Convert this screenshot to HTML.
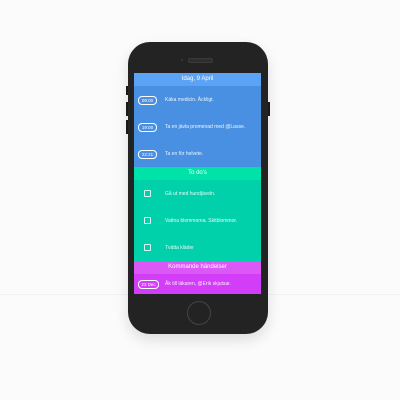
<!DOCTYPE html>
<html><head><style>
body{margin:0;width:400px;height:400px;background:#fbfbfc;position:relative;overflow:hidden;font-family:"Liberation Sans",sans-serif;}
.phone{position:absolute;left:128px;top:42px;width:140px;height:292px;background:#232323;border-radius:22px;box-shadow:0 6px 14px rgba(0,0,0,0.12);}
.btn{position:absolute;background:#1c1c1c;width:2px;}
.screen{position:absolute;left:134px;top:73px;width:127px;height:221px;overflow:hidden;color:#fff;font-size:5px;}
.h{height:13px;line-height:13px;text-align:center;font-size:6px;}
.row{height:27px;position:relative;}
.pill{position:absolute;left:4px;top:50%;margin-top:-4px;width:17px;height:7px;border:0.8px solid #fff;border-radius:4px;font-size:4.5px;line-height:7px;text-align:center;}
.t{position:absolute;left:31px;top:50%;margin-top:-3px;line-height:6px;white-space:nowrap;opacity:.9}
.cb{position:absolute;left:10px;top:50%;margin-top:-3.5px;width:5px;height:5px;border:1px solid #fff;border-radius:1px;opacity:.85}
</style></head><body>
<div style="position:absolute;left:0;top:294px;width:400px;height:1px;background:#f1f1f3"></div>
<div class="btn" style="left:126px;top:86px;height:9px"></div>
<div class="btn" style="left:126px;top:102px;height:14px"></div>
<div class="btn" style="left:126px;top:120px;height:14px"></div>
<div class="btn" style="left:268px;top:102px;height:14px"></div>
<div class="phone"></div>
<div style="position:absolute;left:181px;top:59px;width:2px;height:2px;border-radius:50%;background:#3a3a3a"></div>
<div style="position:absolute;left:188px;top:58px;width:23px;height:3px;border-radius:2px;background:#2e2e2e;border:0.5px solid #3a3a3a"></div>
<div style="position:absolute;left:187px;top:301px;width:22px;height:22px;border-radius:50%;border:1px solid #444"></div>
<div class="screen">
<div class="h" style="background:#5aa3f7">Idag, 9 April</div>
<div style="background:#4a90e2">
<div class="row"><div class="pill">09:00</div><div class="t">Käka medicin. Äckligt.</div></div>
<div class="row"><div class="pill">19:00</div><div class="t">Ta en jävla promenad med @Lasse.</div></div>
<div class="row"><div class="pill">22:21</div><div class="t">Ta en för helvete.</div></div>
</div>
<div class="h" style="background:#00e3a8">To do's</div>
<div style="background:#00d1ab">
<div class="row"><div class="cb"></div><div class="t">Gå ut med hundjäveln.</div></div>
<div class="row"><div class="cb"></div><div class="t">Vattna blommorna. Skitblommor.</div></div>
<div class="row"><div class="cb"></div><div class="t">Tvätta kläder</div></div>
</div>
<div class="h" style="background:#dc58f6">Kommande händelser</div>
<div style="background:#d23ef7;height:20px;position:relative">
<div class="pill" style="width:19px">23 Dec</div><div class="t">Åk till läkaren, @Erik skjutsar.</div></div>
</div>
</body></html>
